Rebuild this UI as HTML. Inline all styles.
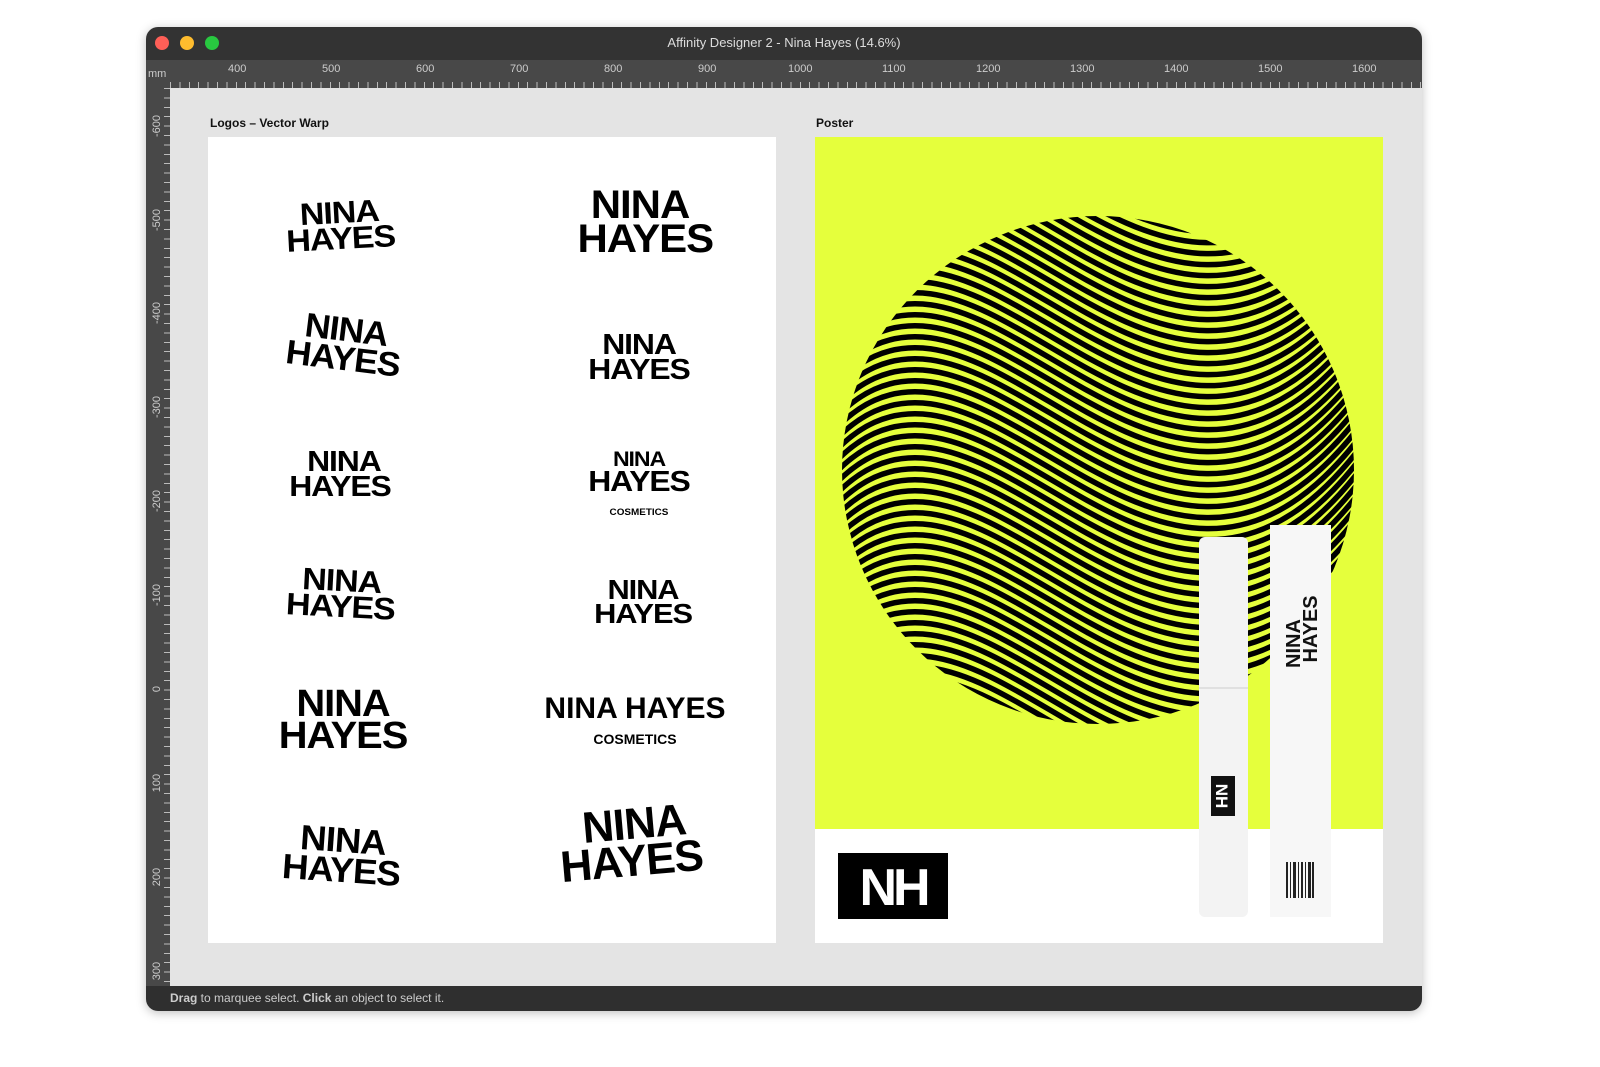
<!DOCTYPE html>
<html><head><style>
*{margin:0;padding:0;box-sizing:border-box}
body{width:1600px;height:1067px;background:#fff;position:relative;overflow:hidden;font-family:"Liberation Sans",sans-serif}
.win{position:absolute;left:146px;top:27px;width:1276px;height:984px;border-radius:12px;overflow:hidden;background:#e4e4e4;box-shadow:0 2px 10px rgba(0,0,0,.25)}
.title{position:absolute;left:0;top:0;width:100%;height:33px;background:#333;color:#ddd;font-size:13px;text-align:center;line-height:32px}
.dot{position:absolute;top:9px;width:14px;height:14px;border-radius:50%}
.hr{position:absolute;left:0;top:33px;width:100%;height:28px;background:#484848}
.hr .tk{position:absolute;left:24px;right:0;bottom:0;height:6px;background:repeating-linear-gradient(90deg,#bbb 0 1px,transparent 1px 9.4px)}
.hr span{position:absolute;top:3px;font-size:11px;color:#ccc}
.vr{position:absolute;left:0;top:61px;width:24px;height:898px;background:#484848}
.vr .tk{position:absolute;right:0;top:0;bottom:0;width:6px;background:repeating-linear-gradient(180deg,#bbb 0 1px,transparent 1px 9.4px)}
.vr span{position:absolute;left:-4px;font-size:11px;color:#ccc;transform:rotate(-90deg);width:30px;text-align:center}
.status{position:absolute;left:0;bottom:0;width:100%;height:25px;background:#2f2f2f;color:#ccc;font-size:12px;line-height:24px;padding-left:24px}
.lbl{position:absolute;font-size:12px;font-weight:bold;color:#111}
.ab{position:absolute;background:#fff}
.logo{position:absolute;font-weight:bold;color:#000;line-height:.85;text-align:center;letter-spacing:-1px;font-family:"Liberation Sans",sans-serif}
</style></head><body>
<div class="win">
<div class="title">Affinity Designer 2 - Nina Hayes (14.6%)
<div class="dot" style="left:9px;background:#fe5f57"></div><div class="dot" style="left:34px;background:#febc2e"></div><div class="dot" style="left:59px;background:#28c840"></div></div>
<div class="hr"><div class="tk"></div><span style="left:2px;top:8px">mm</span>
<span style="left:82px">400</span><span style="left:176px">500</span><span style="left:270px">600</span><span style="left:364px">700</span><span style="left:458px">800</span><span style="left:552px">900</span><span style="left:642px">1000</span><span style="left:736px">1100</span><span style="left:830px">1200</span><span style="left:924px">1300</span><span style="left:1018px">1400</span><span style="left:1112px">1500</span><span style="left:1206px">1600</span></div>
<div class="vr"><div class="tk"></div>
<span style="top:32px">-600</span><span style="top:126px">-500</span><span style="top:219px">-400</span><span style="top:313px">-300</span><span style="top:407px">-200</span><span style="top:501px">-100</span><span style="top:595px">0</span><span style="top:689px">100</span><span style="top:783px">200</span><span style="top:877px">300</span></div>
<div class="status"><b>Drag</b> to marquee select. <b>Click</b> an object to select it.</div>
</div>
<div class="lbl" style="left:210px;top:116px">Logos – Vector Warp</div>
<div class="lbl" style="left:816px;top:116px">Poster</div>
<div class="ab" style="left:208px;top:137px;width:568px;height:806px"></div>
<div class="ab" style="left:815px;top:137px;width:568px;height:806px"></div>

<div class="logo" style="left:270px;top:200px;width:140px;font-size:31px;transform:rotate(-3deg) scaleX(1.1)">NINA<br>HAYES</div>
<div class="logo" style="left:555px;top:188px;width:170px;font-size:40px;transform:scaleX(1.05)">NINA<br>&nbsp;HAYES</div>
<div class="logo" style="left:272px;top:316px;width:145px;font-size:34px;transform:rotate(7deg) scaleX(1.05)">NINA<br>HAYES</div>
<div class="logo" style="left:574px;top:333px;width:130px;font-size:29px;transform:scaleX(1.1)">NINA<br>HAYES</div>
<div class="logo" style="left:275px;top:450px;width:130px;font-size:29px;transform:scaleX(1.1)">&nbsp;NINA<br>HAYES</div>
<div class="logo" style="left:574px;top:445px;width:130px;font-size:29px;transform:scaleX(1.1)"><span style="font-size:21px">NINA</span><br>HAYES<br><span style="font-size:9px;letter-spacing:0">COSMETICS</span></div>
<div class="logo" style="left:270px;top:568px;width:142px;font-size:31px;transform:rotate(3deg) scaleX(1.1)">NINA<br>HAYES</div>
<div class="logo" style="left:578px;top:578px;width:130px;font-size:28px;transform:scaleX(1.1)">NINA<br>HAYES</div>
<div class="logo" style="left:258px;top:688px;width:170px;font-size:38px;transform:scaleX(1.05)">NINA<br>HAYES</div>
<div class="logo" style="left:520px;top:696px;width:230px;font-size:30px;letter-spacing:0">NINA HAYES<br><span style="font-size:14px">COSMETICS</span></div>
<div class="logo" style="left:277px;top:826px;width:130px;font-size:35px;transform:rotate(4deg) scaleX(1.05)">NINA<br>HAYES</div>
<div class="logo" style="left:550px;top:806px;width:160px;font-size:44px;transform:rotate(-5deg)">&nbsp;NINA<br>HAYES</div>

<svg style="position:absolute;left:815px;top:137px" width="568" height="806" viewBox="815 137 568 806">
<defs><clipPath id="c"><ellipse cx="1098" cy="470" rx="256" ry="254"/></clipPath></defs>
<rect x="815" y="137" width="568" height="692" fill="#e5ff3c"/>
<g clip-path="url(#c)" fill="none" stroke="#000" stroke-width="5.5">
<path id="p" d="M820 150 C980 -60 1160 420 1380 90"/>
<use href="#p" y="11"/><use href="#p" y="22"/><use href="#p" y="33"/><use href="#p" y="44"/><use href="#p" y="55"/><use href="#p" y="66"/><use href="#p" y="77"/><use href="#p" y="88"/><use href="#p" y="99"/><use href="#p" y="110"/><use href="#p" y="121"/><use href="#p" y="132"/><use href="#p" y="143"/><use href="#p" y="154"/><use href="#p" y="165"/><use href="#p" y="176"/><use href="#p" y="187"/><use href="#p" y="198"/><use href="#p" y="209"/><use href="#p" y="220"/><use href="#p" y="231"/><use href="#p" y="242"/><use href="#p" y="253"/><use href="#p" y="264"/><use href="#p" y="275"/><use href="#p" y="286"/><use href="#p" y="297"/><use href="#p" y="308"/><use href="#p" y="319"/><use href="#p" y="330"/><use href="#p" y="341"/><use href="#p" y="352"/><use href="#p" y="363"/><use href="#p" y="374"/><use href="#p" y="385"/><use href="#p" y="396"/><use href="#p" y="407"/><use href="#p" y="418"/><use href="#p" y="429"/><use href="#p" y="440"/><use href="#p" y="451"/><use href="#p" y="462"/><use href="#p" y="473"/><use href="#p" y="484"/><use href="#p" y="495"/><use href="#p" y="506"/><use href="#p" y="517"/><use href="#p" y="528"/><use href="#p" y="539"/><use href="#p" y="550"/><use href="#p" y="561"/><use href="#p" y="572"/><use href="#p" y="583"/><use href="#p" y="594"/><use href="#p" y="605"/><use href="#p" y="616"/><use href="#p" y="627"/><use href="#p" y="638"/><use href="#p" y="649"/><use href="#p" y="660"/>
</g>
<rect x="838" y="853" width="110" height="66" fill="#000"/>
<text x="893" y="905" text-anchor="middle" font-family="Liberation Sans" font-weight="bold" font-size="52" fill="#fff" letter-spacing="-4">NH</text>
<rect x="1199" y="537" width="49" height="380" rx="6" fill="#f3f3f3"/>
<line x1="1199" y1="688" x2="1248" y2="688" stroke="#ccc"/>
<rect x="1211" y="776" width="24" height="40" fill="#111"/>
<text transform="translate(1216 796) rotate(90)" text-anchor="middle" font-family="Liberation Sans" font-weight="bold" font-size="17" fill="#fff">NH</text>
<rect x="1270" y="525" width="61" height="392" fill="#f7f7f7"/>
<text transform="translate(1300 668) rotate(-90)" font-family="Liberation Sans" font-weight="bold" font-size="20" fill="#111">NINA</text>
<text transform="translate(1317 668) rotate(-90)" font-family="Liberation Sans" font-weight="bold" font-size="20" fill="#111">&#160;HAYES</text>
<g fill="#222"><rect x="1286" y="862" width="2" height="36"/><rect x="1290" y="862" width="1" height="36"/><rect x="1293" y="862" width="3" height="36"/><rect x="1298" y="862" width="1" height="36"/><rect x="1301" y="862" width="2" height="36"/><rect x="1305" y="862" width="1" height="36"/><rect x="1308" y="862" width="3" height="36"/><rect x="1312" y="862" width="2" height="36"/></g>
</svg>
</body></html>
